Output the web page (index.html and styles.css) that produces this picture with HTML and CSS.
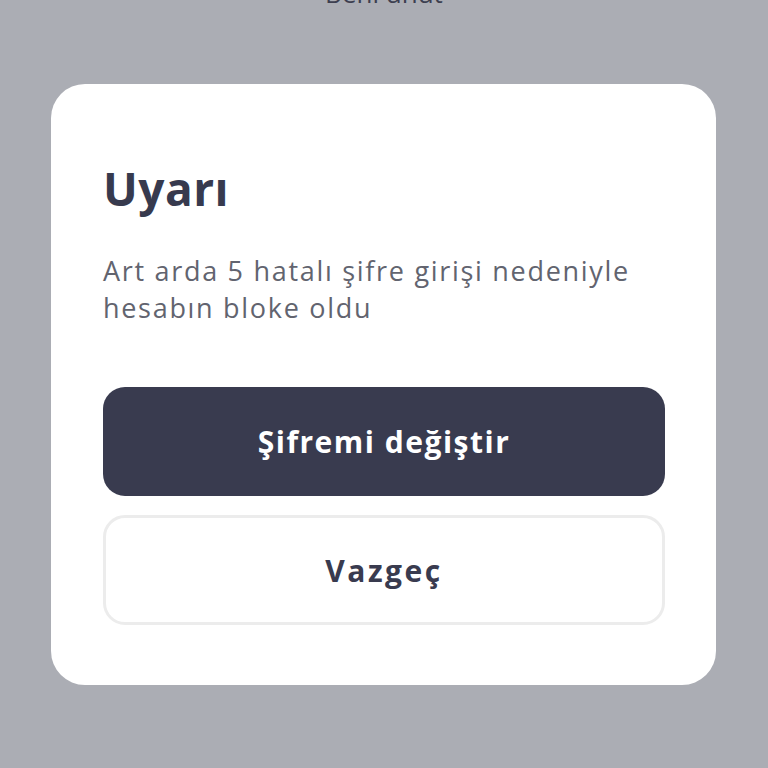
FILE: index.html
```html
<!DOCTYPE html>
<html lang="tr">
<head>
<meta charset="utf-8">
<link rel="stylesheet" href="styles.css">
</head>
<body>
<div class="screen">
  <div class="behind">Beni unut</div>
  <div class="card">
    <h1 class="title">Uyarı</h1>
    <p class="message">Art arda 5 hatalı şifre girişi nedeniyle hesabın bloke oldu</p>
    <div class="actions">
      <button class="btn btn-primary">Şifremi değiştir</button>
      <button class="btn btn-secondary">Vazgeç</button>
    </div>
  </div>
</div>
</body>
</html>
```
FILE: styles.css
```css
html, body {
  margin: 0;
  padding: 0;
  background: #abadb4;
}
.screen {
  width: 768px;
  height: 768px;
  overflow: hidden;
  display: flex;
  flex-direction: column;
  font-family: "Open Sans", "Noto Sans", sans-serif;
}
.behind {
  height: 84px;
  margin-top: -22px;
  text-align: center;
  font-size: 26px;
  line-height: 30px;
  color: #3d3f50;
}
.card {
  margin-top: 22px;
  margin-left: 51px;
  width: 665px;
  height: 601px;
  box-sizing: border-box;
  background: #ffffff;
  border-radius: 34px;
  padding: 74px 51px 0 52px;
}
.title {
  margin: 0;
  font-size: 46px;
  line-height: 60px;
  font-weight: 700;
  color: #373a4e;
  letter-spacing: 0.5px;
}
.message {
  margin: 34px 0 0 0;
  font-size: 27px;
  line-height: 37px;
  color: #62646f;
  letter-spacing: 1.7px;
}
.actions {
  margin-top: 61px;
  display: flex;
  flex-direction: column;
  gap: 19px;
}
.btn {
  height: 109px;
  border-radius: 22px;
  font-family: "Open Sans", "Noto Sans", sans-serif;
  font-size: 30px;
  font-weight: 700;
  letter-spacing: 1.5px;
  box-sizing: border-box;
  cursor: pointer;
}
.btn-primary {
  background: #393b4f;
  color: #ffffff;
  border: none;
}
.btn-secondary {
  height: 110px;
  background: #ffffff;
  color: #393b4f;
  border: 3px solid #ececec;
  letter-spacing: 2.5px;
}
```
